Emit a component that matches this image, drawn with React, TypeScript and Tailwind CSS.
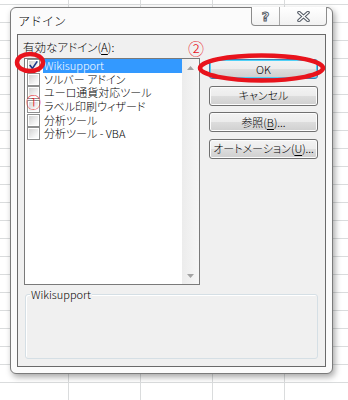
import React from "react";

const items = [
  { label: "Wikisupport", checked: true, selected: true },
  { label: "ソルバー アドイン" },
  { label: "ユーロ通貨対応ツール" },
  { label: "ラベル印刷ウィザード" },
  { label: "分析ツール" },
  { label: "分析ツール - VBA" },
];

function CheckBox({ checked }: { checked?: boolean }) {
  return (
    <span className="w-[13px] h-[13px] shrink-0 border border-[#8e8f8f] bg-white p-[1px] flex">
      <span className="flex-1 bg-[linear-gradient(135deg,#d2d2d2,#f4f4f4_70%,#ffffff)] flex items-center justify-center">
        {checked && (
          <svg width="9" height="9" viewBox="0 0 9 9">
            <path d="M1.2 4.6 L3.4 7.4 L7.8 1" fill="none" stroke="#1e3a8a" strokeWidth="1.6" strokeLinecap="square" />
          </svg>
        )}
      </span>
    </span>
  );
}

function Btn({ children, def }: { children: React.ReactNode; def?: boolean }) {
  return (
    <div
      className={
        "h-[20px] w-[109px] rounded-[3px] border flex items-center justify-center whitespace-nowrap text-[11px] leading-[13px] text-black bg-[linear-gradient(to_bottom,#f3f3f3_0%,#ececec_48%,#dddddd_52%,#cfcfcf_100%)] " +
        (def
          ? "border-[#3c7fb1] shadow-[inset_0_0_0_1px_#4fd0f7]"
          : "border-[#707070] shadow-[inset_0_0_0_1px_#fcfcfc]")
      }
    >
      {children}
    </div>
  );
}

export default function App() {
  return (
    <div className="relative w-[348px] h-[400px] overflow-hidden bg-white bg-[linear-gradient(to_right,#dadcdd_1px,transparent_1px),linear-gradient(to_bottom,#dadcdd_1px,transparent_1px)] [background-size:72px_18px] [background-position:68px_4px] pl-[10px] pt-[7px] font-['Noto_Sans_CJK_JP',sans-serif] font-light text-black">
      {/* dialog */}
      <div className="relative w-[323px] h-[367px] rounded-[6px] border border-[#7b7b7b] bg-[#fbfbfb] shadow-[2px_3px_6px_rgba(0,0,0,0.35)] flex flex-col">
        {/* title bar */}
        <div className="h-[26px] flex items-center pl-[7px] text-[12px] leading-[14px]">アドイン</div>
        <div className="absolute left-[240px] top-[-1px] w-[76px] h-[19px] border border-t-0 border-[#8c8c8c] rounded-b-[4px] bg-[linear-gradient(to_bottom,#ffffff,#f2f2f2)] flex">
          <div className="w-[27px] h-full flex items-center justify-center text-[13px] leading-none font-bold text-white [-webkit-text-stroke:1px_#555c66] font-['DejaVu_Sans',sans-serif]">
            ?
          </div>
          <div className="flex-1 h-full border-l border-[#a8a8a8] flex items-center justify-center">
            <svg width="13" height="11" viewBox="0 0 13 11">
              <path d="M2 1.5 L11 9.5 M11 1.5 L2 9.5" stroke="#555c66" strokeWidth="3.6" strokeLinecap="round" />
              <path d="M2 1.5 L11 9.5 M11 1.5 L2 9.5" stroke="#ffffff" strokeWidth="1.4" strokeLinecap="round" />
            </svg>
          </div>
        </div>

        {/* client */}
        <div className="ml-[6px] w-[309px] h-[333px] border border-[#6a6a6a] bg-[#f0f0f0] pl-[6px] flex flex-col">
          <div className="flex">
            {/* left column */}
            <div className="flex flex-col">
              <div className="h-[23px] pt-[5px] -ml-[1px] text-[11.5px] leading-[14px] whitespace-nowrap [font-feature-settings:'palt']">
                有効なアドイン(<span className="underline underline-offset-2">A</span>):
              </div>
              <div className="w-[176px] h-[227px] border border-[#7a7a7a] bg-white flex">
                <div className="flex-1 flex flex-col">
                  {items.map((it) => (
                    <div key={it.label} className="h-[13.6px] flex items-center">
                      <span className="ml-[2px] flex">
                        <CheckBox checked={it.checked} />
                      </span>
                      <div
                        className={
                          "ml-[3px] flex-1 h-full flex items-center pl-[1px] text-[11px] leading-[13px] whitespace-nowrap [font-feature-settings:'palt'] " +
                          (it.selected ? "bg-[#3399ff] text-white" : "text-black")
                        }
                      >
                        {it.label}
                      </div>
                    </div>
                  ))}
                </div>
                <div className="w-[17px] bg-[linear-gradient(to_right,#ececec,#f6f6f6)] flex flex-col justify-between">
                  <div className="h-[17px] flex items-center justify-center">
                    <svg width="7" height="4" viewBox="0 0 7 4">
                      <path d="M0 4 L3.5 0 L7 4 Z" fill="#a3a3a3" />
                    </svg>
                  </div>
                  <div className="h-[17px] flex items-center justify-center">
                    <svg width="7" height="4" viewBox="0 0 7 4">
                      <path d="M0 0 L3.5 4 L7 0 Z" fill="#a3a3a3" />
                    </svg>
                  </div>
                </div>
              </div>
            </div>
            {/* right column */}
            <div className="ml-[9px] pt-[24px] flex flex-col gap-[6.5px] [font-feature-settings:'palt']">
              <Btn def>OK</Btn>
              <Btn>キャンセル</Btn>
              <Btn>
                参照(<span className="underline underline-offset-2">B</span>)...
              </Btn>
              <Btn>
                オートメーション(<span className="underline underline-offset-2">U</span>)...
              </Btn>
            </div>
          </div>
          {/* group box */}
          <div className="relative mt-[9px] ml-[1px] w-[293px] h-[65px] rounded-[3px] border border-[#d5dfe5] shadow-[inset_1px_1px_0_#ffffff]">
            <span className="absolute left-[4px] top-[-8px] bg-[#f0f0f0] px-[1px] text-[11px] leading-[14px]">
              Wikisupport
            </span>
          </div>
        </div>
      </div>

      {/* red annotations */}
      <svg className="absolute left-0 top-0 pointer-events-none" width="348" height="400" viewBox="0 0 348 400">
        <ellipse cx="30" cy="62.5" rx="13" ry="8.5" fill="none" stroke="#e8131c" strokeWidth="4.5" />
        <ellipse cx="261.5" cy="68" rx="61.5" ry="12.5" fill="none" stroke="#e8131c" strokeWidth="4.5" />
        <text x="33.5" y="108" fill="#e8131c" fontSize="15" textAnchor="middle" fontFamily="Noto Sans CJK JP, sans-serif">
          ①
        </text>
        <text x="196" y="55" fill="#e8131c" fontSize="16" textAnchor="middle" fontFamily="Noto Sans CJK JP, sans-serif">
          ②
        </text>
      </svg>
    </div>
  );
}
